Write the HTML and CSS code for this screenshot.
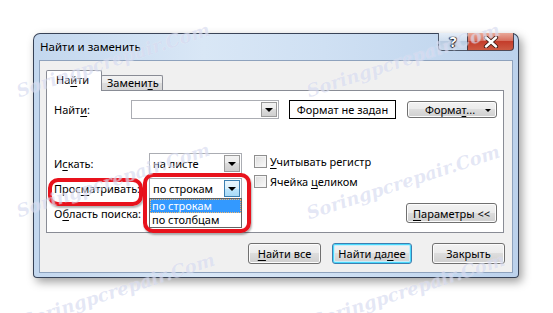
FILE: index.html
```html
<!DOCTYPE html>
<html lang="ru">
<head>
    <meta charset="UTF-8">
    <title>Найти и заменить</title>
    <link rel="stylesheet" href="styles.css">
</head>
<body>
<div class="stage">
    <div class="window">
        <div class="titlebar">
            <span class="title">Найти и заменить</span>
            <div class="caption">
                <span class="cap-help">?</span>
                <span class="cap-close">
                    <svg width="16" height="12" viewBox="0 0 16 12">
                        <path d="M3 1.5 L13 10.5 M13 1.5 L3 10.5" stroke="#3a1a14" stroke-width="4.2" stroke-linecap="round"/>
                        <path d="M3 1.5 L13 10.5 M13 1.5 L3 10.5" stroke="#fff" stroke-width="2.4" stroke-linecap="round"/>
                    </svg>
                </span>
            </div>
        </div>

        <div class="client">
            <!-- Tabs -->
            <div class="tabs">
                <div class="tab active">На<u>й</u>ти</div>
                <div class="tab">Замени<u>т</u>ь</div>
            </div>

            <div class="panel">
                <div class="find-row">
                    <span class="label-find">Найт<u>и</u>:</span>
                    <div class="combo combo-find">
                        <span class="combo-text"></span>
                        <span class="arrow"><i class="tri"></i></span>
                    </div>
                    <div class="format-box">Формат не задан</div>
                    <div class="btn btn-format"><span>Форма<u>т</u>...</span><i class="tri small"></i></div>
                </div>

                <div class="options">
                    <span class="opt-label">И<u>с</u>кать:</span>
                    <div class="combo">
                        <span class="combo-text">на листе</span>
                        <span class="arrow"><i class="tri"></i></span>
                    </div>
                    <div class="checks">
                        <div class="check"><span class="box"></span><span><u>У</u>читывать регистр</span></div>
                        <div class="check"><span class="box"></span><span>Ячейка <u>ц</u>еликом</span></div>
                    </div>

                    <span class="opt-label">Прос<u>м</u>атривать:</span>
                    <div class="combo focused">
                        <span class="combo-text">по строкам</span>
                        <span class="arrow"><i class="tri"></i></span>
                        <div class="droplist">
                            <div class="item selected">по строкам</div>
                            <div class="item">по столбцам</div>
                        </div>
                    </div>

                    <span class="opt-label">О<u>б</u>ласть поиска:</span>
                    <div class="combo-slot"></div>
                    <div class="btn btn-params"><u>П</u>араметры &lt;&lt;</div>
                </div>

                <!-- red marks from the screenshot -->
                <div class="mark-label"></div>
                <div class="mark-list"></div>
            </div>

            <div class="actions">
                <div class="btn btn-all"><u>Н</u>айти все</div>
                <div class="btn btn-next default">Найти да<u>л</u>ее</div>
                <div class="btn btn-close">Закрыть</div>
            </div>
        </div>
    </div>

    <span class="wm wm1">Soringpcrepair.Com</span>
    <span class="wm wm2">Soringpcrepair.Com</span>
    <span class="wm wm3">Soringpcrepair.Com</span>
    <span class="wm wm4">Soringpcrepair.Com</span>
    <span class="wm wm5">Soringpcrepair.Com</span>
    <span class="wm wm6">Soringpcrepair.Com</span>
</div>
</body>
</html>
```

FILE: styles.css
```css
/* General */
* {
    box-sizing: border-box;
}

body {
    margin: 0;
    background: #fff;
    font-family: "Noto Sans", sans-serif;
    font-size: 11px;
    color: #000;
}

.stage {
    position: relative;
    width: 553px;
    height: 313px;
    overflow: hidden;
    padding: 33px 0 0 33px;
}

u {
    text-decoration: underline;
    text-underline-offset: 2px;
}

/* Window frame */
.window {
    width: 486px;
    height: 245px;
    border: 1px solid rgba(30, 40, 60, 0.85);
    border-radius: 7px 7px 4px 4px;
    background: linear-gradient(to right, #c3d7ee, #d9e7f6 35%, #cfe0f3 60%, #bcd2ec);
    box-shadow: 3px 4px 10px rgba(0, 0, 0, 0.38);
}

.titlebar {
    height: 26px;
    display: flex;
    justify-content: space-between;
    align-items: flex-start;
    padding-left: 6px;
}

.title {
    padding-top: 5px;
    font-size: 11.5px;
    line-height: 16px;
}

.caption {
    display: flex;
    margin-right: 4px;
    margin-top: -1px;
}

.cap-help,
.cap-close {
    height: 18px;
    display: flex;
    align-items: center;
    justify-content: center;
    border: 1px solid rgba(40, 50, 70, 0.8);
    border-top: none;
}

.cap-help {
    width: 29px;
    border-radius: 0 0 0 4px;
    border-right: none;
    background: linear-gradient(#e6eef8, #d0deee 45%, #b9cbe1 50%, #c9d9ec);
    color: #fff;
    font-weight: bold;
    font-size: 14px;
    text-shadow: 0 0 1px #223, 1px 0 1px #223, -1px 0 1px #223, 0 1px 1px #223;
}

.cap-close {
    width: 47px;
    border-radius: 0 0 4px 0;
    background: linear-gradient(#e9a898, #d7705f 45%, #c43d2b 50%, #cc5a43);
}

/* Client area */
.client {
    height: 213px;
    margin: 0 5px 0 5px;
    border: 1px solid #8ea2bd;
    background: #f0f0f0;
    padding: 9px 8px 0 6px;
}

.tabs {
    display: flex;
    align-items: flex-end;
    height: 20px;
}

.tab {
    border: 1px solid #898c95;
    border-bottom: none;
    border-radius: 2px 2px 0 0;
    height: 15px;
    width: 62px;
    padding-left: 5px;
    line-height: 13px;
    background: linear-gradient(#f3f3f3, #ebebeb 50%, #dddddd 50%, #d6d6d6);
    margin-left: -1px;
}

.tab.active {
    position: relative;
    z-index: 1;
    height: 21px;
    width: 56px;
    margin: 0 0 -1px 0;
    padding-left: 9px;
    line-height: 18px;
    background: #fff;
}

.panel {
    position: relative;
    width: 458px;
    height: 143px;
    background: #fff;
    border: 1px solid #898c95;
    padding: 9px 6px 0 7px;
}

/* Find row */
.find-row {
    display: flex;
    align-items: center;
    height: 19px;
}

.label-find {
    width: 77px;
}

.combo {
    position: relative;
    display: flex;
    align-items: center;
    border: 1px solid #abadb3;
    background: #fff;
    height: 100%;
}

.combo-find {
    width: 148px;
    height: 19px;
}

.combo-text {
    flex: 1;
    padding-left: 3px;
    white-space: nowrap;
}

.arrow {
    width: 16px;
    height: calc(100% - 2px);
    margin-right: 1px;
    border: 1px solid #9a9a9a;
    background: linear-gradient(#f2f2f2, #ebebeb 50%, #dcdcdc 50%, #cfcfcf);
    display: flex;
    align-items: center;
    justify-content: center;
}

.tri {
    display: block;
    width: 0;
    height: 0;
    border-left: 4px solid transparent;
    border-right: 4px solid transparent;
    border-top: 4px solid #000;
}

.tri.small {
    position: absolute;
    right: 5px;
    top: 7px;
    border-left-width: 3px;
    border-right-width: 3px;
    border-top-width: 3px;
}

.focused .arrow {
    border-color: #3c7fb1;
    background: linear-gradient(#eaf6fd, #d9f0fc 50%, #bee6fd 50%, #a7d9f5);
}

.format-box {
    width: 107px;
    height: 19px;
    margin-left: 10px;
    border: 1px solid #000;
    text-align: center;
    line-height: 17px;
}

/* Buttons */
.btn {
    position: relative;
    height: 21px;
    border: 1px solid #707070;
    border-radius: 3px;
    background: linear-gradient(#f2f2f2, #ebebeb 50%, #dddddd 50%, #cfcfcf);
    box-shadow: inset 0 0 0 1px #fcfcfc;
    display: flex;
    align-items: center;
    justify-content: center;
    white-space: nowrap;
}

.btn-format {
    width: 90px;
    height: 17px;
    margin-left: 11px;
    padding-right: 4px;
}

.btn.default {
    border-color: #3c7fb1;
    box-shadow: inset 0 0 0 1px #48d8fb, inset 0 0 0 2px #c4eefc;
}

/* Lower options */
.options {
    display: grid;
    grid-template-columns: 95px 93px 1fr;
    grid-template-rows: 21px 21px 20px;
    row-gap: 4px;
    margin-top: 34px;
    align-items: center;
}

.options .combo {
    height: 21px;
}

.checks {
    grid-column: 3;
    grid-row: 1 / span 2;
    align-self: start;
    display: flex;
    flex-direction: column;
    gap: 7px;
    padding: 2px 0 0 12px;
}

.check {
    display: flex;
    align-items: center;
    gap: 3px;
    height: 13px;
}

.box {
    width: 13px;
    height: 13px;
    border: 1px solid #8f8f8f;
    background: linear-gradient(135deg, #dcdcdc, #fbfbfb);
    box-shadow: inset 0 0 0 1px #f4f4f4;
}

.btn-params {
    grid-column: 3;
    width: 91px;
    height: 20px;
    justify-self: end;
}

.droplist {
    position: absolute;
    z-index: 2;
    top: 100%;
    left: -1px;
    width: 93px;
    border: 1px solid #646464;
    background: #fff;
}

.item {
    height: 14px;
    line-height: 14px;
    padding-left: 2px;
    overflow: hidden;
}

.item.selected {
    background: #3399ff;
    color: #fff;
    outline: 1px dotted #f5b76a;
    outline-offset: -1px;
}

/* Red highlight marks */
.mark-label,
.mark-list {
    position: absolute;
    z-index: 3;
    border: 4px solid #e8121c;
    border-radius: 10px;
    box-shadow: 1px 2px 2px rgba(0, 0, 0, 0.3);
}

.mark-label {
    left: 1px;
    top: 87px;
    width: 95px;
    height: 28px;
}

.mark-list {
    left: 96px;
    top: 82px;
    width: 108px;
    height: 60px;
}

/* Bottom buttons */
.actions {
    display: flex;
    justify-content: flex-end;
    margin: 10px -1px 0 0;
}

.btn-all {
    width: 73px;
}

.btn-next {
    width: 80px;
    margin-left: 11px;
}

.btn-close {
    width: 73px;
    margin-left: 20px;
}

/* Watermark */
.wm {
    position: absolute;
    z-index: 5;
    transform: translate(-50%, -50%) rotate(-18deg);
    font-family: "DejaVu Serif", serif;
    font-style: italic;
    font-weight: bold;
    font-size: 18px;
    color: rgba(160, 170, 220, 0.28);
    text-shadow: 0 0 1px rgba(255, 255, 255, 0.6);
    white-space: nowrap;
    pointer-events: none;
}

.wm1 { left: 113px; top: 60px; }
.wm2 { left: 403px; top: 60px; }
.wm3 { left: 113px; top: 180px; }
.wm4 { left: 403px; top: 182px; }
.wm5 { left: 118px; top: 290px; }
.wm6 { left: 408px; top: 290px; }
```
